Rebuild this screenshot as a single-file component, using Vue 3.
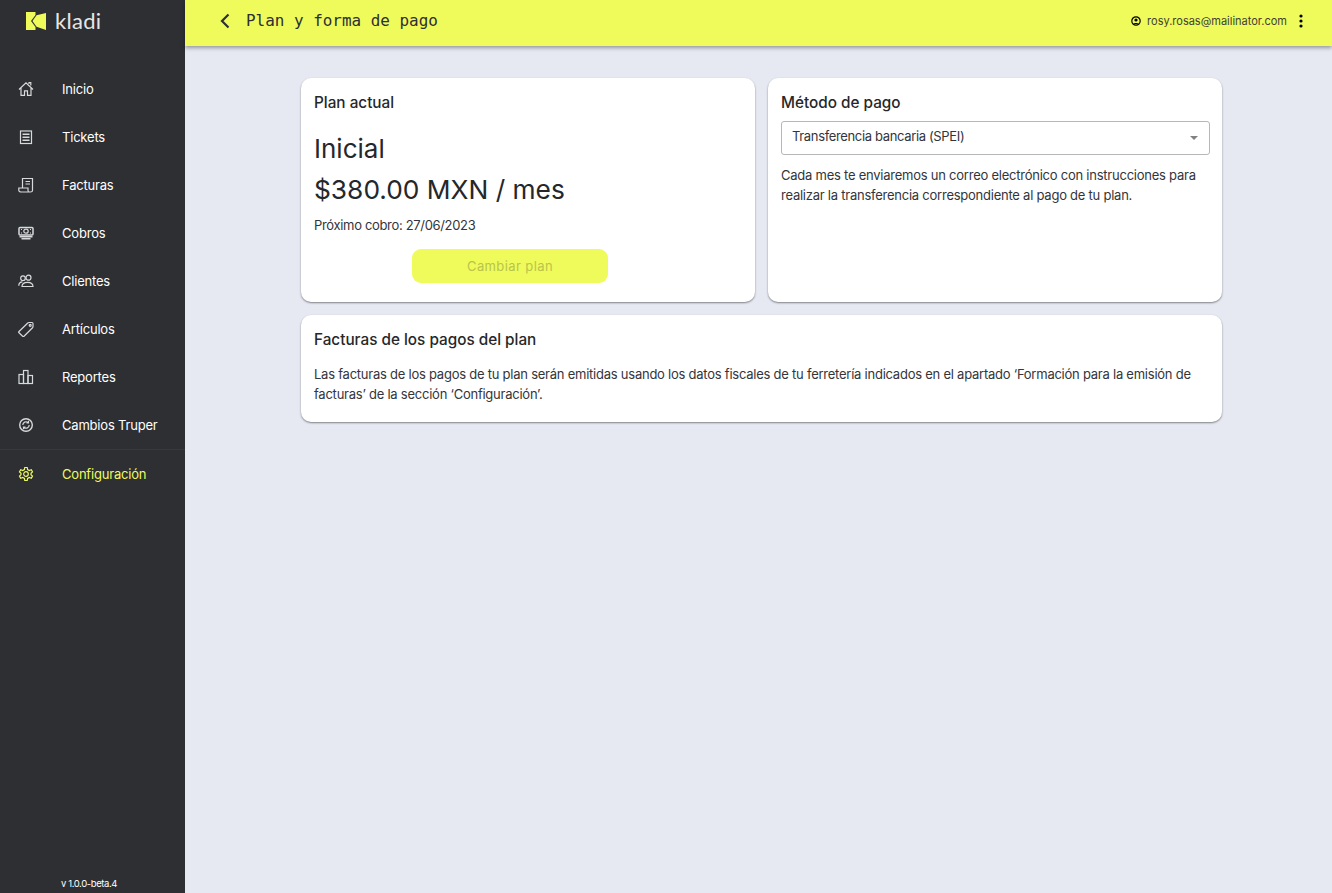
<template>
  <div class="layout">
    <aside class="sidebar">
      <div class="logo">
        <svg width="20" height="18" viewBox="0 0 20 18">
          <path d="M0 0H9.500V3L5 9L9.500 15V18H0Z" fill="#effb5b" />
          <path d="M10.500 3.200L20 1V18L10.500 14.800L6.500 9Z" fill="#effb5b" />
        </svg>
        <span class="logo-text">kladi</span>
      </div>
      <nav class="nav">
        <a
          v-for="item in items"
          :key="item.label"
          class="nav-item"
          :class="{ active: item.active, divided: item.divided }"
        >
          <svg class="nav-icon" width="16" height="16" viewBox="0 0 16 16" fill="none" stroke="currentColor" stroke-width="1.200" v-html="item.icon"></svg>
          <span>{{ item.label }}</span>
        </a>
      </nav>
      <div class="version">v 1.0.0-beta.4</div>
    </aside>

    <div class="main">
      <header class="topbar">
        <div class="title-wrap">
          <svg width="12" height="16" viewBox="0 0 12 16" fill="none" stroke="#2d2f33" stroke-width="2.200">
            <path d="M9.500 1.500L3 8L9.500 14.500" />
          </svg>
          <h1 class="title">Plan y forma de pago</h1>
        </div>
        <div class="user">
          <svg width="10" height="10" viewBox="0 0 10 10">
            <circle cx="5" cy="5" r="4.200" fill="none" stroke="#000" stroke-width="1.200" />
            <circle cx="5" cy="4" r="1.600" fill="#000" />
            <path d="M2.300 8C3 6.500 7 6.500 7.700 8Z" fill="#000" />
          </svg>
          <span class="email">rosy.rosas@mailinator.com</span>
          <svg class="dots" width="4" height="14" viewBox="0 0 4 14" fill="#000">
            <circle cx="2" cy="2" r="1.600" />
            <circle cx="2" cy="7" r="1.600" />
            <circle cx="2" cy="12" r="1.600" />
          </svg>
        </div>
      </header>

      <main class="content">
        <div class="grid">
          <section class="card plan">
            <h2 class="card-title">Plan actual</h2>
            <div class="plan-name">Inicial</div>
            <div class="plan-price">$380.00 MXN / mes</div>
            <p class="next">Próximo cobro: 27/06/2023</p>
            <button class="change" disabled>Cambiar plan</button>
          </section>
          <section class="card">
            <h2 class="card-title">Método de pago</h2>
            <div class="select">
              <span>Transferencia bancaria (SPEI)</span>
              <i class="caret"></i>
            </div>
            <p class="text method-text">
              Cada mes te enviaremos un correo electrónico con instrucciones para realizar la transferencia correspondiente al pago de tu plan.
            </p>
          </section>
          <section class="card wide">
            <h2 class="card-title">Facturas de los pagos del plan</h2>
            <p class="text invoice-text">
              Las facturas de los pagos de tu plan serán emitidas usando los datos fiscales de tu ferretería indicados en el apartado ‘Formación para la emisión de facturas’ de la sección ‘Configuración’.
            </p>
          </section>
        </div>
      </main>
    </div>
  </div>
</template>

<script setup>
const items = [
  { label: 'Inicio', icon: '<path d="M1 8.500L8 1.800l7 6.700M3 7v7.300h3.500v-4.500h3v4.500H13V7M11 3V1.500h1.800v3"/>' },
  { label: 'Tickets', icon: '<rect x="2.500" y="2" width="11" height="12.500"/><path d="M4.500 5.200h7M4.500 8.200h7M4.500 11.200h7" stroke-width="1.400"/>' },
  { label: 'Facturas', icon: '<path d="M4.500 10.500V1.500h10v12c0 1-1 1.500-2 1.500H3c-1 0-2.200-.5-2.200-1.800V11h9.200v2.500c0 1 1 1.500 1.500 1.500M7.500 4.500h4.500M7.500 7h4.500"/>' },
  { label: 'Cobros', icon: '<rect x="1" y="2.500" width="14" height="7.500" rx="1" stroke-width="1.500"/><ellipse cx="8" cy="6.200" rx="2.200" ry="2"/><path d="M1.500 11.800h13M3.500 13.800h9" stroke-width="1.500"/><path d="M3 4.500h1M3 8h1M12 4.500h1M12 8h1"/>' },
  { label: 'Clientes', icon: '<circle cx="5" cy="5.200" r="2.300"/><circle cx="10.500" cy="4.700" r="2.500"/><path d="M.8 12.800c0-2.500 1.800-4 3.700-4M4 13.500c0-5.500 11-5.500 11 0z"/>' },
  { label: 'Artículos', icon: '<path d="M1 10.500L9.500 2.200c.4-.4 1-.7 1.500-.7h3c.6 0 1 .4 1 1v3c0 .6-.3 1.100-.7 1.500L6 15.200c-.4.400-1 .400-1.400 0L1 11.800c-.4-.4-.4-.9 0-1.300z"/><circle cx="12.200" cy="4.300" r="1"/>' },
  { label: 'Reportes', icon: '<rect x="1" y="5.500" width="4.500" height="9"/><rect x="5.500" y="1.500" width="4.500" height="13"/><rect x="10" y="6.500" width="4.500" height="8"/>' },
  { label: 'Cambios Truper', icon: '<circle cx="8" cy="8" r="6.300" stroke-width="1.400"/><path d="M4.800 8a3.200 3.200 0 0 1 5.200-2.500M11.200 8a3.200 3.200 0 0 1-5.200 2.500M10.500 3.800v2h-2M5.500 12.200v-2h2"/>' },
  { label: 'Configuración', active: true, divided: true, icon: '<circle cx="8" cy="8" r="2.300"/><path d="M6.800 1.500h2.400l.4 2 1.700 1 2-.7 1.200 2.100-1.500 1.300v1.600l1.500 1.300-1.200 2.100-2-.7-1.700 1-.4 2H6.800l-.4-2-1.700-1-2 .7-1.200-2.100L3 8.800V7.200L1.500 5.900l1.200-2.100 2 .7 1.700-1z"/>' }
]
</script>

<style>
html,
body {
  margin: 0;
  height: 100%;
  background: #e6e9f2;
}
</style>

<style scoped>
.layout {
  display: flex;
  min-height: 893px;
  font-family: "Inter", "Liberation Sans", sans-serif;
  color: #25272b;
}

.sidebar {
  width: 185px;
  flex-shrink: 0;
  background: #2d2f33;
  display: flex;
  flex-direction: column;
  box-sizing: border-box;
  height: 893px;
}

.logo {
  display: flex;
  align-items: center;
  gap: 9px;
  height: 42px;
  padding-left: 26px;
}

.logo-text {
  color: #e6e6e6;
  font-family: "Lato", sans-serif;
  font-size: 22px;
  letter-spacing: 0.3px;
  line-height: 1;
}

.nav {
  display: flex;
  flex-direction: column;
  margin-top: 23px;
}

.nav-item {
  display: flex;
  align-items: center;
  height: 48px;
  padding-left: 18px;
  gap: 28px;
  color: #fff;
  font-size: 13px;
  letter-spacing: -0.2px;
}

.nav-item .nav-icon {
  color: #d8d9da;
  flex-shrink: 0;
}

.nav-item.divided {
  border-top: 1px solid #37393d;
}

.nav-item.active,
.nav-item.active .nav-icon {
  color: #effb5b;
}

.version {
  margin-top: auto;
  padding: 0 0 3px 61px;
  color: #fff;
  font-size: 9.500px;
  letter-spacing: -0.4px;
  line-height: 12px;
}

.main {
  flex: 1;
  min-width: 0;
}

.topbar {
  height: 46px;
  background: #effb5b;
  display: flex;
  align-items: center;
  justify-content: space-between;
  padding: 0 29px 5px 34px;
  box-sizing: border-box;
  box-shadow: 0 2px 4px rgba(0, 0, 0, 0.35);
}

.title-wrap {
  display: flex;
  align-items: center;
  gap: 15px;
}

.title {
  margin: 0;
  font-family: "DejaVu Sans Mono", monospace;
  font-size: 15.950px;
  font-weight: 400;
  color: #2d2f33;
}

.user {
  display: flex;
  align-items: center;
  font-size: 11px;
}

.email {
  margin-left: 6px;
  color: #3f4133;
}

.dots {
  margin-left: 12px;
}

.content {
  padding: 32px 0 0 116px;
}

.grid {
  width: 921px;
  display: grid;
  grid-template-columns: 454px 454px;
  grid-template-rows: 224px 107px;
  gap: 13px;
}

.card {
  background: #fff;
  border-radius: 10px;
  padding: 16px 12px 0 13px;
  box-sizing: border-box;
  box-shadow: 0 1px 2px rgba(0, 0, 0, 0.45);
}

.wide {
  grid-column: 1 / 3;
}

.card-title {
  margin: 0;
  font-size: 15.300px;
  line-height: 18px;
  font-weight: 500;
  color: #25272b;
}

.plan-name {
  margin-top: 20px;
  font-size: 26px;
  line-height: 34px;
}

.plan-price {
  margin-top: 7px;
  font-size: 26.300px;
  line-height: 34px;
}

.next {
  margin: 9px 0 0;
  font-size: 13px;
  letter-spacing: -0.33px;
  line-height: 18px;
  color: #33353a;
}

.change {
  display: block;
  width: 196px;
  height: 34px;
  margin: 15px 0 0 98px;
  border: 0;
  border-radius: 9px;
  background: #effb5b;
  color: #b9c44a;
  font-family: inherit;
  font-size: 13px;
  letter-spacing: 0.4px;
}

.select {
  display: flex;
  align-items: center;
  justify-content: space-between;
  margin-top: 9px;
  padding: 0 11px 5px 10px;
  height: 27px;
  border: 1px solid #b5b7bb;
  border-radius: 3px;
  font-size: 13px;
  letter-spacing: -0.35px;
  color: #33353a;
}

.caret {
  width: 0;
  height: 0;
  margin-top: 5px;
  border-left: 4px solid transparent;
  border-right: 4px solid transparent;
  border-top: 4px solid #808285;
}

.text {
  margin: 0;
  font-size: 13px;
  letter-spacing: -0.24px;
  line-height: 20px;
  color: #33353a;
}

.method-text {
  margin-top: 10px;
}

.invoice-text {
  margin-top: 15px;
}
</style>
